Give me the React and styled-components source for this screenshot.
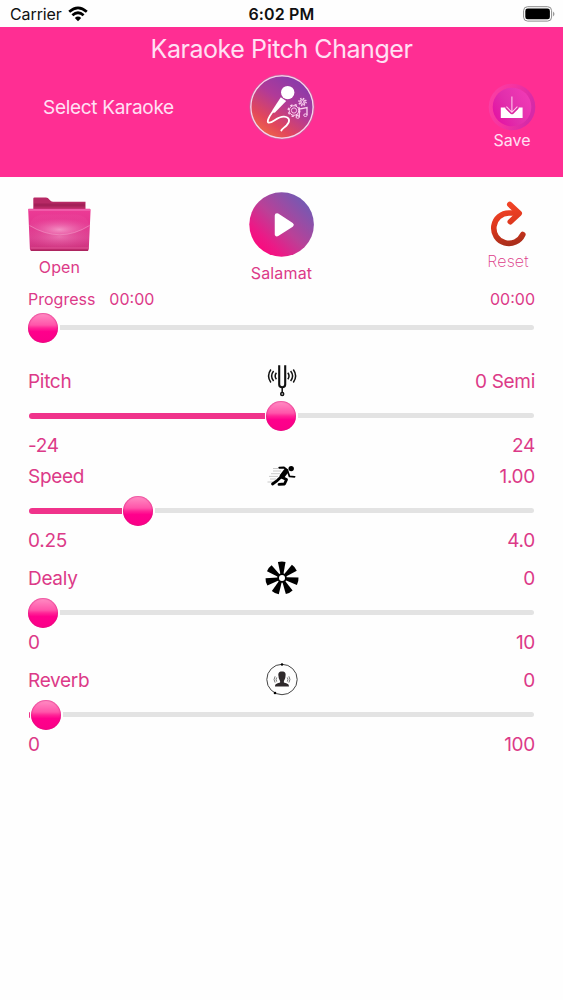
import styled, { createGlobalStyle } from "styled-components";

const sliders = [
  { name: "Pitch", value: "0 Semi", min: "-24", max: "24", percent: 49.8, icon: <ForkIcon />, gap: 0 },
  { name: "Speed", value: "1.00", min: "0.25", max: "4.0", percent: 20, icon: <RunnerIcon />, gap: 4 },
  { name: "Dealy", value: "0", min: "0", max: "10", percent: 0, icon: <DelayIcon />, gap: 11 },
  { name: "Reverb", value: "0", min: "0", max: "100", percent: 0.6, icon: <ReverbIcon />, gap: 11 },
];

function App() {
  return (
    <Screen>
      <GlobalStyle />
      <StatusBar>
        <Carrier>
          <span>Carrier</span>
          <WifiIcon />
        </Carrier>
        <Clock>6:02 PM</Clock>
        <BatteryIcon />
      </StatusBar>
      <Header>
        <Title>Karaoke Pitch Changer</Title>
        <HeaderRow>
          <SelectText>Select Karaoke</SelectText>
          <MicIcon />
          <SaveButton>
            <SaveIcon />
            <span>Save</span>
          </SaveButton>
        </HeaderRow>
      </Header>
      <Actions>
        <Action $w={63} $top={20}>
          <FolderIcon />
          <ActionText $top={4}>Open</ActionText>
        </Action>
        <Action $w={66} $top={15}>
          <PlayIcon />
          <ActionText $top={4}>Salamat</ActionText>
        </Action>
        <Action $w={54} $top={23}>
          <ResetIcon />
          <ActionText $thin>Reset</ActionText>
        </Action>
      </Actions>
      <Progress>
        <Times>
          <span>Progress</span>
          <Elapsed>00:00</Elapsed>
          <span>00:00</span>
        </Times>
        <Slider percent={0} />
      </Progress>
      {sliders.map((s) => (
        <Control key={s.name} $gap={s.gap}>
          <Labels>
            <span>{s.name}</span>
            {s.icon}
            <Value>{s.value}</Value>
          </Labels>
          <Slider percent={s.percent} />
          <Bounds>
            <span>{s.min}</span>
            <span>{s.max}</span>
          </Bounds>
        </Control>
      ))}
    </Screen>
  );
}

export default App;

function Slider({ percent }) {
  return (
    <SliderRow>
      <FillBox style={{ width: `calc((100% - 30px) * ${percent / 100})` }}>
        <Fill />
      </FillBox>
      <Thumb />
      <Rest />
    </SliderRow>
  );
}

// icons

function WifiIcon() {
  return (
    <svg width="20" height="16" viewBox="0 0 20 16">
      <g fill="none" stroke="#000" strokeWidth="2.7">
        <path d="M1.2 5.8 Q10 -2 18.8 5.8" />
        <path d="M4.4 9.3 Q10 4.2 15.6 9.3" />
      </g>
      <path d="M6.8 12 Q10 9.2 13.2 12 L10 15.3Z" />
    </svg>
  );
}

function BatteryIcon() {
  return (
    <svg width="32" height="16" viewBox="0 0 32 16">
      <rect x="0.6" y="0.7" width="28" height="14.4" rx="4" fill="#fff" stroke="#8c8c8c" />
      <rect x="2.3" y="2.5" width="24.6" height="10.8" rx="2.4" />
      <path d="M30 5.5 Q33 8 30 10.5Z" fill="#999" />
    </svg>
  );
}

function Gear({ x, y, r }) {
  return (
    <g transform={`translate(${x} ${y})`} fill="none" stroke="#fbd0ef">
      <circle r={r} strokeWidth="1" />
      <circle r={r * 0.55} strokeWidth="0.9" />
      <circle r={r + 1} strokeWidth="1.4" strokeDasharray={`${((r + 1) * Math.PI) / 8} ${((r + 1) * Math.PI) / 8}`} />
    </g>
  );
}

function MicIcon() {
  return (
    <svg width="66" height="66" viewBox="0 0 66 66">
      <defs>
        <linearGradient id="mic" x1="0.12" y1="0.95" x2="0.7" y2="0.1">
          <stop offset="0" stopColor="#f26e42" />
          <stop offset="0.28" stopColor="#e2465c" />
          <stop offset="0.65" stopColor="#b13a98" />
          <stop offset="1" stopColor="#8e3aa8" />
        </linearGradient>
      </defs>
      <circle cx="33" cy="33" r="31.2" fill="url(#mic)" stroke="#f6d3ea" strokeWidth="1.5" />
      <circle cx="33" cy="33" r="32.3" fill="none" stroke="#b96b9c" strokeWidth="0.6" />
      <circle cx="38.7" cy="18.6" r="6.7" fill="#fff" />
      <path d="M31.8 23.2 L37.2 27 L26 38.5 Q22.5 39.5 23.5 36Z" fill="#fff" />
      <path
        d="M23.8 37.5 C20.5 42 17.3 47.5 19.5 48.6 C23 50 28.5 42.2 35 42.7 C41 43.3 41.5 47.5 37.5 51.5 C34.8 54 33 55 32.3 56.5"
        fill="none" stroke="#fff" strokeWidth="1.8" strokeLinecap="round"
      />
      <Gear x={45} y={36.5} r={4.8} />
      <Gear x={53.5} y={28} r={2.6} />
      <path d="M50.3 43 V35 L58 33.5 V41" fill="none" stroke="#fbd0ef" strokeWidth="1.3" />
      <ellipse cx="48.7" cy="43" rx="1.7" ry="1.3" fill="none" stroke="#fbd0ef" />
      <ellipse cx="56.4" cy="41.2" rx="1.7" ry="1.3" fill="none" stroke="#fbd0ef" />
    </svg>
  );
}

function SaveIcon() {
  return (
    <svg width="48" height="48" viewBox="0 0 48 48">
      <defs>
        <linearGradient id="saveRing" x1="0" y1="0" x2="1" y2="0.3">
          <stop offset="0" stopColor="#fb40a4" />
          <stop offset="0.5" stopColor="#f633a0" />
          <stop offset="1" stopColor="#d62aa8" />
        </linearGradient>
        <linearGradient id="saveFace" x1="0" y1="0.8" x2="1" y2="0.2">
          <stop offset="0" stopColor="#e410a2" />
          <stop offset="0.45" stopColor="#e12fac" />
          <stop offset="1" stopColor="#f23bb6" />
        </linearGradient>
      </defs>
      <circle cx="24" cy="24" r="23.3" fill="url(#saveRing)" />
      <circle cx="24" cy="24" r="19.3" fill="url(#saveFace)" />
      <path d="M12.8 24.5 H17 L24 31.5 L31 24.5 H34.6 V35 H12.8Z" fill="#fff" />
      <path d="M24 30.5 L18.2 24.6 M24 30.5 L29.8 24.6" stroke="#d9259f" strokeWidth="2.4" />
      <path d="M23.9 13.5 V29 M18.4 23.6 L23.9 29.3 L29.4 23.6" fill="none" stroke="#ffc6ec" strokeWidth="1.1" />
    </svg>
  );
}

function FolderIcon() {
  return (
    <svg width="63" height="55" viewBox="0 0 63 55">
      <defs>
        <linearGradient id="folder" x1="0" y1="0" x2="0" y2="1">
          <stop offset="0" stopColor="#ed3b96" />
          <stop offset="0.25" stopColor="#e73791" />
          <stop offset="0.7" stopColor="#dc3d8f" />
          <stop offset="1" stopColor="#c92b76" />
        </linearGradient>
        <radialGradient id="folderGlow" cx="0.5" cy="0.75" r="0.55">
          <stop offset="0" stopColor="#f7a0cd" stopOpacity="0.85" />
          <stop offset="1" stopColor="#ed5aa9" stopOpacity="0.15" />
        </radialGradient>
        <radialGradient id="folderLow" cx="0.5" cy="0.5" r="0.55">
          <stop offset="0" stopColor="#f28fc2" stopOpacity="0.6" />
          <stop offset="1" stopColor="#e0559d" stopOpacity="0.1" />
        </radialGradient>
      </defs>
      <path d="M5.3 1.5 Q5.3 0.5 6.5 0.5 H18 Q20 0.6 21.5 2.8 Q23 4.8 25 4.8 H57.5 V15 H5.3Z" fill="#b72965" />
      <path d="M6 8 H57" stroke="#a42058" strokeWidth="3" />
      <path d="M0.9 11.8 Q0 11.7 0.2 13 L1.9 52 Q2 54 3.7 54 H59 Q60.7 54 60.8 52 L62.6 13 Q62.6 11.7 61.5 11.8Z" fill="url(#folder)" />
      <path d="M0.7 13 H62" stroke="#f47abb" strokeWidth="1.2" />
      <path d="M1.5 28.5 Q32 47 61.5 28.5 L60.5 51 H2.5Z" fill="url(#folderLow)" />
      <path d="M1.5 28.5 Q5 18 14 17.5 H49 Q58 18 61.5 28.5 Q32 47 1.5 28.5Z" fill="url(#folderGlow)" />
      <path d="M1.5 28.5 Q32 47 61.5 28.5" fill="none" stroke="#f3a3cc" strokeOpacity="0.6" strokeWidth="0.9" />
      <path d="M2.5 51 H60.5" stroke="#dc5592" strokeWidth="1" />
      <path d="M3 53.2 H60" stroke="#ad245f" strokeWidth="1.6" />
    </svg>
  );
}

function PlayIcon() {
  return (
    <svg width="66" height="66" viewBox="0 0 66 66">
      <defs>
        <linearGradient id="play" x1="0.15" y1="0.88" x2="0.86" y2="0.16">
          <stop offset="0" stopColor="#fa0a7e" />
          <stop offset="0.18" stopColor="#ec1986" />
          <stop offset="0.5" stopColor="#bb4097" />
          <stop offset="1" stopColor="#7659b2" />
        </linearGradient>
      </defs>
      <circle cx="32.6" cy="32.5" r="32.3" fill="url(#play)" />
      <path d="M28 23.5 L42.5 32.8 L28 42.2Z" fill="#fff" stroke="#fff" strokeWidth="4.5" strokeLinejoin="round" />
    </svg>
  );
}

function ResetIcon() {
  return (
    <svg width="40" height="50" viewBox="0 0 40 50">
      <defs>
        <linearGradient id="reset" gradientUnits="userSpaceOnUse" x1="10" y1="2" x2="18" y2="46">
          <stop offset="0" stopColor="#f54528" />
          <stop offset="0.55" stopColor="#dc371d" />
          <stop offset="1" stopColor="#a82e1b" />
        </linearGradient>
      </defs>
      <g fill="none" stroke="url(#reset)" strokeWidth="5.6" strokeLinecap="round" strokeLinejoin="round">
        <path d="M30 13 H21 A15.2 15.2 0 1 0 34.8 34.5" />
        <path d="M21.8 4.5 L31.2 13.4 L22.3 21.7" />
      </g>
    </svg>
  );
}

function ForkIcon() {
  return (
    <svg width="34" height="34" viewBox="0 0 34 34">
      <g fill="none" stroke="#111" strokeWidth="1.5">
        <path d="M14.2 1.2 V20.5 Q14.2 23.2 17.2 23.2 Q20.2 23.2 20.2 20.5 V1.2" strokeWidth="2.1" />
        <path d="M17.2 23 V28.5" />
        <circle cx="17.2" cy="30" r="1.5" />
        <path d="M11.4 8.8 Q8.9 12 11.4 15.3" />
        <path d="M8.6 7 Q4.6 12 8.6 17" />
        <path d="M5.9 5.5 Q1.2 12 5.9 18.5" />
        <path d="M22.8 8.8 Q25.3 12 22.8 15.3" />
        <path d="M25.6 7 Q29.6 12 25.6 17" />
        <path d="M28.3 5.5 Q33 12 28.3 18.5" />
      </g>
    </svg>
  );
}

function RunnerIcon() {
  return (
    <svg width="34" height="34" viewBox="0 0 34 34">
      <path d="M8 9.5 H13 M8 12 H16 M6 14.7 H15 M4 17.4 H13 M5 20 H11 M2.5 23 H8" stroke="#bbb" strokeWidth="0.8" />
      <circle cx="26.2" cy="9.6" r="2.7" />
      <g fill="none" stroke="#000" strokeLinecap="round" strokeLinejoin="round">
        <path d="M14.3 8.7 L19 8.5 L22.5 11.2" strokeWidth="1.9" />
        <path d="M20.7 12.5 L17.3 17" strokeWidth="5.2" />
        <path d="M22.7 12.5 L24.5 17.4 L29.6 17.8" strokeWidth="1.8" />
        <path d="M17.3 18.5 L21.5 20.6 L19.5 25 L14 25.3" strokeWidth="2.8" />
        <path d="M16 18 L12.2 21.6 L7.5 25" strokeWidth="2.8" />
      </g>
    </svg>
  );
}

function DelayIcon() {
  return (
    <svg width="34" height="34" viewBox="-17 -17 34 34">
      {[-1, 50.4, 101.8, 153.2, 204.6, 256, 307.4].map((a) => (
        <path key={a} d="M-3.8 -16 Q0 -17.2 3.8 -16 L1.5 -4 H-1.5Z" transform={`rotate(${a})`} />
      ))}
      <circle r="3.9" fill="#fff" stroke="#000" strokeWidth="1.8" />
    </svg>
  );
}

function ReverbIcon() {
  return (
    <svg width="34" height="34" viewBox="0 0 34 34">
      <circle cx="17" cy="16.5" r="15.2" fill="none" stroke="#444" strokeWidth="1" />
      <circle cx="17" cy="1.5" r="1.2" />
      <circle cx="10" cy="30" r="1.3" />
      <path
        d="M17 8.6 C20.3 8.6 21 10.5 20.5 13 C20.4 16 19.2 17 18.9 18.2 V19.5 C20.8 20.5 24 20.2 24 23.5 H10 C10 20.2 13.2 20.5 15.1 19.5 V18.2 C14.8 17 13.6 16 13.5 13 C13 10.5 13.7 8.6 17 8.6Z"
        fill="#2e292b"
      />
      <g fill="none" stroke="#777" strokeWidth="1">
        <path d="M22.3 14.5 Q23.6 16.5 22.3 18.6 M23.9 13.3 Q26 16.5 23.9 19.6" />
        <path d="M11.7 14.5 Q10.4 16.5 11.7 18.6 M10.1 13.3 Q8 16.5 10.1 19.6" />
      </g>
    </svg>
  );
}

// styles

const GlobalStyle = createGlobalStyle`
body{
  margin: 0;
  background: #fefefe;
}
*{
  box-sizing: border-box;
}
svg{
  display: block;
  flex: none;
}
`;

const Screen = styled.div`
  width: 563px;
  height: 1000px;
  overflow: hidden;
  background: #fefefe;
  color: #dc3a88;
  font-family: Inter, "Liberation Sans", sans-serif;
  font-size: 19px;
  white-space: nowrap;
`;

const StatusBar = styled.div`
  display: grid;
  grid-template-columns: 1fr auto 1fr;
  align-items: center;
  height: 27px;
  padding: 1px 8px 0 10px;
  color: #111;
  font-size: 16px;
  > svg{
    justify-self: end;
  }
`;

const Carrier = styled.div`
  display: flex;
  align-items: center;
  gap: 6px;
  letter-spacing: -0.1px;
`;

const Clock = styled.div`
  margin-right: 2px;
  font-weight: 600;
  letter-spacing: 0.15px;
`;

const Header = styled.div`
  height: 150px;
  background: #ff2e93;
  color: #ffe0f4;
`;

const Title = styled.div`
  padding-top: 5px;
  line-height: 34px;
  font-size: 25px;
  letter-spacing: -0.45px;
  text-align: center;
`;

const HeaderRow = styled.div`
  display: grid;
  grid-template-columns: 1fr auto 1fr;
  align-items: start;
  padding: 8px 28px 0 28px;
`;

const SelectText = styled.div`
  padding: 1px 0 0 15px;
  line-height: 66px;
  letter-spacing: -0.3px;
`;

const SaveButton = styled.div`
  display: flex;
  flex-direction: column;
  align-items: center;
  justify-self: end;
  margin-right: -1px;
  padding-top: 9px;
  font-size: 16px;
  line-height: 18px;
`;

const Actions = styled.div`
  display: grid;
  grid-template-columns: 1fr auto 1fr;
  height: 111px;
  padding: 0 28px;
  > :last-child{
    justify-self: end;
  }
`;

const Action = styled.div`
  display: flex;
  flex-direction: column;
  align-items: center;
  width: ${(p) => p.$w}px;
  padding-top: ${(p) => p.$top}px;
`;

const ActionText = styled.div`
  margin-top: ${(p) => p.$top || 0}px;
  line-height: 22px;
  font-size: 16px;
  letter-spacing: 0.15px;
  font-weight: ${(p) => (p.$thin ? 200 : 400)};
`;

const Progress = styled.div`
  height: 77px;
  padding: 0 28px;
`;

const Times = styled.div`
  display: flex;
  height: 21px;
  line-height: 22px;
  font-size: 16px;
`;

const Elapsed = styled.span`
  flex: 1;
  margin-left: 14px;
`;

const Control = styled.div`
  margin-top: ${(p) => p.$gap}px;
  padding: 0 28px;
  letter-spacing: -0.3px;
`;

const Labels = styled.div`
  display: grid;
  grid-template-columns: 1fr 34px 1fr;
  grid-template-rows: 32px;
  align-items: center;
  height: 32px;
`;

const Value = styled.span`
  text-align: right;
`;

const SliderRow = styled.div`
  display: flex;
  align-items: center;
  height: 37px;
`;

const FillBox = styled.div`
  overflow: hidden;
`;

const Fill = styled.div`
  height: 6px;
  margin: 0 1px;
  border-radius: 3px 0 0 3px;
  background: #f0338b;
`;

const Thumb = styled.div`
  flex: none;
  width: 30px;
  height: 30px;
  border-radius: 50%;
  background: linear-gradient(#ff8fc4 0%, #ff55aa 40%, #ff2597 50%, #ff008c 62%, #fa0088 100%);
  box-shadow: inset 0 0 1px 1px rgb(214 20 120 / 45%);
`;

const Rest = styled.div`
  flex: 1;
  height: 5px;
  margin: 0 1px 0 2px;
  border-radius: 0 3px 3px 0;
  background: #e3e3e3;
`;

const Bounds = styled.div`
  display: flex;
  justify-content: space-between;
  height: 22px;
  line-height: 23px;
`;
